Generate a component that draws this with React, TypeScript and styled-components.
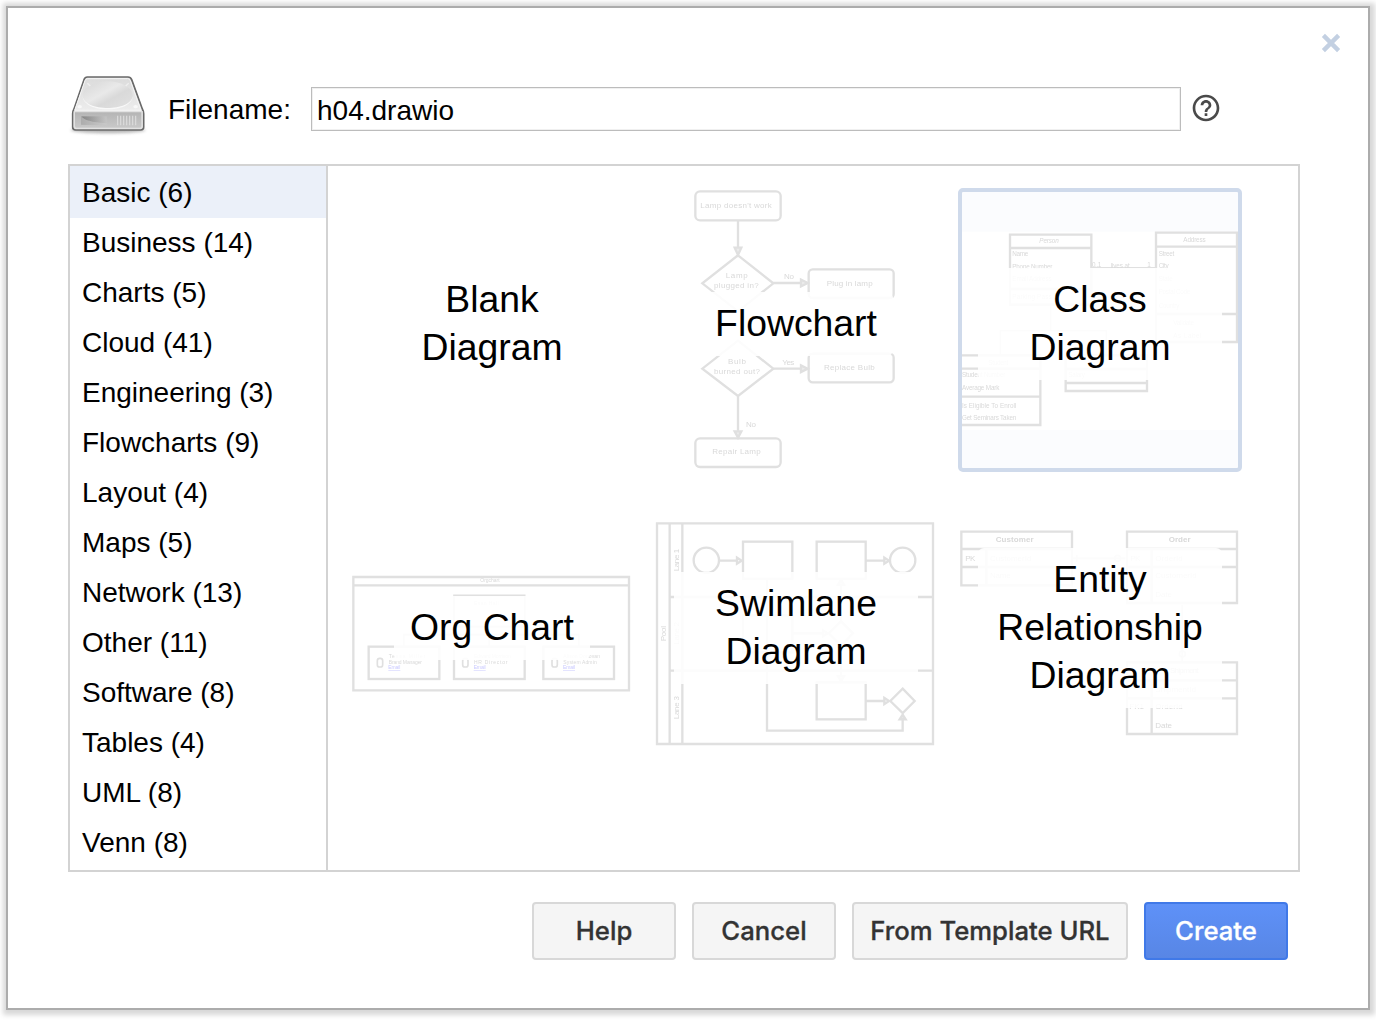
import React from "react";
import styled, { createGlobalStyle, css } from "styled-components";

const GlobalStyle = createGlobalStyle`
  * { box-sizing: border-box; }
  body {
    margin: 0;
    background: #fff;
    color: #000;
    font-family: Helvetica, "Liberation Sans", Arial, sans-serif;
    font-size: 28px;
  }
`;

const Page = styled.div`
  height: 1020px;
  padding: 6px 6px 10px;
  overflow: hidden;
`;

const Dialog = styled.div`
  display: flex;
  flex-direction: column;
  width: 1364px;
  height: 1004px;
  padding: 25px 27px 48px 60px;
  border: 2px solid #acacac;
  background: #fff;
  box-shadow: 1px 1px 5px 4px #d8d8d8;
`;

const CloseButton = styled.button`
  display: flex;
  align-self: flex-end;
  padding: 0;
  border: 0;
  background: none;
`;

const FileRow = styled.div`
  display: flex;
  align-items: center;
  height: 64px;
  margin-top: 23px;
`;

const FileLabel = styled.label`
  flex: none;
  width: 159px;
  padding-left: 16px;
  margin-top: 3px;
  white-space: nowrap;
`;

const FileInput = styled.input`
  width: 870px;
  height: 44px;
  margin: 2px 9px 0 0;
  padding: 5px 5px 1px;
  border: 1px solid #bcbcbc;
  border-radius: 0;
  box-shadow: inset 0 0 0 1px #f0f0f0;
  outline: none;
  font: inherit;
`;

const Browser = styled.div`
  display: flex;
  width: 1232px;
  height: 708px;
  margin-top: 24px;
  border: 2px solid #d3d3d3;
`;

const Categories = styled.ul`
  flex: none;
  width: 258px;
  margin: 0;
  padding: 0;
  border-right: 2px solid #d3d3d3;
  list-style: none;
`;

const Category = styled.li<{ $active?: boolean }>`
  height: 52px;
  margin-bottom: -2px;
  padding-left: 12px;
  line-height: 54px;
  white-space: nowrap;
  ${(p) => p.$active && css`background: #ebf0f9;`}
`;

const Templates = styled.div`
  display: grid;
  grid-template-columns: repeat(3, 284px);
  grid-auto-rows: 284px;
  gap: 20px;
  align-content: start;
  padding: 22px 0 0 22px;
`;

const Template = styled.div<{ $selected?: boolean }>`
  display: grid;
  grid-template: 100% / 100%;
  border-radius: 5px;
  overflow: hidden;
  ${(p) => p.$selected && css`
    border: 4px solid #cfdaeb;
    background: #fbfcfe;
  `}
`;

const Preview = styled.svg`
  grid-area: 1 / 1;
  place-self: center;
  width: 284px;
  height: 284px;
  fill: none;
  stroke: #e0e0e0;
  stroke-width: 7;
  filter: blur(0.75px);
  text {
    fill: #d9d9d9;
    stroke: none;
    font-size: 24px;
  }
`;

const Title = styled.div`
  grid-area: 1 / 1;
  place-self: center;
  z-index: 1;
  max-width: 244px;
  margin-bottom: 13px;
  padding: 7px 16px 9px;
  border-radius: 6px;
  background: rgba(255, 255, 255, 0.88);
  font-size: 37.33px;
  line-height: 48px;
  text-align: center;
`;

const Actions = styled.div`
  display: flex;
  justify-content: flex-end;
  gap: 16px;
  margin: 30px 53px 0 0;
`;

const Button = styled.button<{ $primary?: boolean; $width?: number }>`
  width: ${(p) => p.$width ?? 144}px;
  height: 58px;
  padding: 0 0 2px;
  border: 2px solid #d8d8d8;
  border-radius: 4px;
  background: #f5f5f5;
  color: #333;
  font: 500 25.7px Inter, sans-serif;
  -webkit-text-stroke: 0.3px currentColor;
  white-space: nowrap;
  ${(p) => p.$primary && css`
    border-color: #4079e8;
    background: linear-gradient(#5e91f8, #5886e5);
    color: #fff;
  `}
`;

const Drive = styled.svg`
  flex: none;
  margin-bottom: 7px;
`;

const CloseIcon = () => (
  <svg width="20" height="20" viewBox="0 0 20 20">
    <path d="M2.4 2.4 17.6 17.6M17.6 2.4 2.4 17.6" stroke="#c3d0e2" strokeWidth="4.4" />
  </svg>
);

const HelpIcon = () => (
  <svg width="32" height="32" viewBox="0 0 24 24" fill="#4a4a4a">
    <path d="M11 18h2v-2h-2v2zm1-16C6.48 2 2 6.48 2 12s4.48 10 10 10 10-4.48 10-10S17.52 2 12 2zm0 18c-4.41 0-8-3.59-8-8s3.59-8 8-8 8 3.59 8 8-3.59 8-8 8zm0-14c-2.21 0-4 1.79-4 4h2c0-1.1.9-2 2-2s2 .9 2 2c0 2-3 1.75-3 5h2c0-2.25 3-2.5 3-5 0-2.21-1.79-4-4-4z" />
  </svg>
);

const DriveIcon = () => (
  <Drive width="84" height="68" viewBox="12 0 252 204">
    <defs>
      <linearGradient id="top" x1="0" y1="0" x2="0" y2="1">
        <stop offset="0" stopColor="#dcdcdc" />
        <stop offset="1" stopColor="#ececec" />
      </linearGradient>
      <linearGradient id="platter" x1="0" y1="0" x2="1" y2="1">
        <stop offset="0" stopColor="#d6d6d6" />
        <stop offset=".42" stopColor="#e9e9e9" />
        <stop offset=".6" stopColor="#d9d9d9" />
        <stop offset="1" stopColor="#e2e2e2" />
      </linearGradient>
      <linearGradient id="front" x1="0" y1="0" x2="0" y2="1">
        <stop offset="0" stopColor="#b4b4b4" />
        <stop offset="1" stopColor="#c9c9c9" />
      </linearGradient>
      <linearGradient id="slot">
        <stop offset="0" stopColor="#858585" />
        <stop offset="1" stopColor="#c4c4c4" />
      </linearGradient>
      <filter id="shade" x="-10%" y="-60%" width="120%" height="220%">
        <feGaussianBlur stdDeviation="5" />
      </filter>
    </defs>
    <ellipse cx="132" cy="177" rx="112" ry="10" fill="#999" opacity=".7" filter="url(#shade)" />
    <path d="M70 18h122q8 0 11 8l32 88q4 7 4 14v40q0 9-9 9H35q-9 0-9-9v-40q0-7 4-14L60 26q3-8 10-8z" fill="url(#top)" stroke="#696969" strokeWidth="5" />
    <path d="M71 23h120q6 0 8 6l32 89H32L63 29q2-6 8-6z" fill="url(#top)" stroke="#f5f5f5" strokeWidth="3" />
    <ellipse cx="131" cy="73" rx="75" ry="42" fill="url(#platter)" />
    <path d="M56 75c2 54 148 54 150 0-4 48-146 48-150 0z" fill="#f8f8f8" />
    <ellipse cx="47" cy="107" rx="7" ry="5" fill="#f8f8f8" />
    <ellipse cx="215" cy="107" rx="7" ry="5" fill="#f8f8f8" />
    <path d="M70 37l9 8M194 37l-9 8" stroke="#efefef" strokeWidth="4" />
    <path d="M31 122h203v44q0 6-6 6H37q-6 0-6-6z" fill="url(#front)" stroke="#e2e2e2" strokeWidth="4" />
    <path d="M52 136h76v25H52z" fill="url(#slot)" />
    <path d="M52 136q10 17 76 21v4H52z" fill="#cecece" opacity=".55" />
    <path d="M161 134v29M170 134v29M179 134v29M188 134v29M197 134v29M206 134v29M215 134v29" stroke="#dcdcdc" strokeWidth="3.5" />
  </Drive>
);

const FlowchartPreview = () => (
  <Preview viewBox="-18 24 852 852">
    <rect x="106" y="34" width="256" height="87" rx="14" />
    <path d="M234 121v82M234 648v104M340 309h82M340 566h82" />
    <path d="M224 203h20l-10 22zM224 754h20l-10 19zM423 299v20l20-10zM423 556v20l20-10z" fill="#ececec" />
    <path d="M234 226 340 310 234 394 127 310zM234 482 340 566 234 648 127 566z" />
    <rect x="446" y="268" width="255" height="86" rx="12" />
    <rect x="446" y="521" width="255" height="86" rx="12" />
    <rect x="106" y="775" width="256" height="86" rx="14" />
    <text x="121" y="84" textLength="214">Lamp doesn't work</text>
    <text x="197" y="294" textLength="66">Lamp</text>
    <text x="162" y="324" textLength="134">plugged in?</text>
    <text x="372" y="297" textLength="30">No</text>
    <text x="500" y="318" textLength="138">Plug in lamp</text>
    <text x="204" y="552" textLength="54">Bulb</text>
    <text x="162" y="581" textLength="138">burned out?</text>
    <text x="367" y="556" textLength="36">Yes</text>
    <text x="492" y="570" textLength="152">Replace Bulb</text>
    <text x="258" y="742" textLength="30">No</text>
    <text x="157" y="822" textLength="145">Repair Lamp</text>
  </Preview>
);

const SmallTextPreview = styled(Preview)`
  text { font-size: 19px; }
`;

const ClassPreview = () => (
  <SmallTextPreview viewBox="54 24 852 852">
    <path d="M54 155h852v595H54z" fill="#fff" stroke="none" />
    <path d="M210 164h244v210H210zM210 204h244M210 327h244" />
    <path d="M648 158h243v328H648zM648 200h243M648 402h243" />
    <path d="M454 263h194M332 376v76M181 526v-74h318v74" strokeWidth="4" />
    <path d="M54 526h247v209H54M54 566h247M54 650h247" />
    <path d="M377 526h244v107H377zM377 567h244M377 609h244" />
    <text x="298" y="190" fontStyle="italic" textLength="58">Person</text>
    <text x="217" y="228" textLength="48">Name</text>
    <text x="217" y="266" textLength="120">Phone Number</text>
    <text x="217" y="304" textLength="118">Email Address</text>
    <text x="217" y="358" textLength="118">Parking Pass</text>
    <text x="456" y="261" textLength="28">0..1</text>
    <text x="512" y="263" textLength="57">lives at</text>
    <text x="622" y="261">1</text>
    <text x="730" y="187" textLength="67">Address</text>
    <text x="656" y="227" textLength="47">Street</text>
    <text x="656" y="264" textLength="30">City</text>
    <text x="656" y="304" textLength="42">State</text>
    <text x="656" y="343" textLength="95">Postal Code</text>
    <text x="656" y="383" textLength="62">Country</text>
    <text x="700" y="434" textLength="62">Validate</text>
    <text x="700" y="473" textLength="84">As Label</text>
    <text x="145" y="554" textLength="60">Student</text>
    <text x="66" y="592" textLength="130">Student Number</text>
    <text x="66" y="631" textLength="112">Average Mark</text>
    <text x="66" y="683" textLength="163">Is Eligible To Enroll</text>
    <text x="66" y="721" textLength="163">Get Seminars Taken</text>
    <text x="385" y="592" textLength="50">Salary</text>
  </SmallTextPreview>
);

const people = [
  { x: 86, name: "Tessa Miller", role: "Brand Manager" },
  { x: 342, name: "Edward Morrison", role: "HR Director" },
  { x: 610, name: "Alison Donovan", role: "System Admin" },
];

const OrgCanvas = styled(Preview)`
  text { font-size: 15px; }
`;

const EmailLink = styled.text`
  && { fill: #c9c9ff; }
  text-decoration: underline;
`;

const OrgPreview = () => (
  <OrgCanvas viewBox="30 -204 852 852">
    <path d="M40 51h827v340H40zM40 76h827" />
    <path d="M342 106h212v94H342zM448 200v60M191 260v-36h525v36" strokeWidth="5" />
    <text x="421" y="67" textLength="58">Orgchart</text>
    <text x="402" y="134" textLength="74">Evan Hall</text>
    {people.map((p) => (
      <g key={p.name}>
        <rect x={p.x} y="260" width="212" height="97" />
        <rect x={p.x + 26} y="295" width="16" height="26" rx="7" strokeWidth="5" />
        <text x={p.x + 60} y="294" textLength="110">{p.name}</text>
        <text x={p.x + 60} y="312" textLength="100">{p.role}</text>
        <EmailLink x={p.x + 59} y="328" textLength="36">Email</EmailLink>
      </g>
    ))}
  </OrgCanvas>
);

const SwimlanePreview = () => (
  <Preview viewBox="27 -54 852 852">
    <path d="M36 40h828v662H36zM74 40v662M112 40v662M74 261h790M74 482h790" />
    <circle cx="184" cy="151" r="38" />
    <circle cx="773" cy="151" r="38" />
    <rect x="294" y="95" width="148" height="111" />
    <rect x="515" y="95" width="147" height="111" />
    <rect x="294" y="316" width="148" height="111" />
    <rect x="515" y="517" width="147" height="111" />
    <path d="M222 152h56M662 152h58M662 573h58M442 370h92M366 206v456h407v-40M588 336V224M588 407v92" />
    <path d="M773 536 809 573 773 609 736 573zM588 334 624 370 588 407 551 370z" />
    <path d="M276 143v18l14-9zM718 143v18l14-9zM718 564v18l14-9zM764 628h18l-9-14z" />
    <path d="M534 361v18l14-9zM579 224h18l-9-14zM579 499h18l-9 14z" />
    <text transform="translate(102 184) rotate(-90)" textLength="68">Lane 1</text>
    <text transform="translate(102 404) rotate(-90)" textLength="68">Lane 2</text>
    <text transform="translate(102 628) rotate(-90)" textLength="70">Lane 3</text>
    <text transform="translate(62 394) rotate(-90)" textLength="46">Pool</text>
  </Preview>
);

const EntityPreview = () => (
  <Preview viewBox="24 -54 852 852">
    <path d="M34 65h332v161H34zM34 117h332M34 171h332M109 117v109" />
    <path d="M531 65h330v214H531zM531 117h330M531 171h330M605 117v162" />
    <path d="M531 457h330v215H531zM531 511h330M531 565h330M605 511v161" />
    <path d="M366 145h160M380 135v20M697 284v170" strokeWidth="5" />
    <circle cx="503" cy="145" r="9" strokeWidth="5" />
    <circle cx="697" cy="432" r="9" strokeWidth="5" />
    <text x="137" y="95" fontWeight="700" textLength="114">Customer</text>
    <text x="656" y="95" fontWeight="700" textLength="66">Order</text>
    <text x="660" y="489" fontWeight="700" textLength="86">Shipment</text>
    <text x="46" y="153" textLength="30">PK</text>
    <text x="120" y="153" textLength="124">CustomerId</text>
    <text x="120" y="205" textLength="62">Name</text>
    <text x="541" y="153" textLength="30">PK</text>
    <text x="616" y="153" textLength="82">OrderId</text>
    <text x="616" y="205" textLength="124">CustomerId</text>
    <text x="616" y="260" textLength="50">Date</text>
    <text x="616" y="547" textLength="122">ShipmentId</text>
    <text x="538" y="598" textLength="44">FK1</text>
    <text x="616" y="598" textLength="82">OrderId</text>
    <text x="616" y="654" textLength="50">Date</text>
  </Preview>
);

const categories: [string, number][] = [
  ["Basic", 6], ["Business", 14], ["Charts", 5], ["Cloud", 41], ["Engineering", 3],
  ["Flowcharts", 9], ["Layout", 4], ["Maps", 5], ["Network", 13], ["Other", 11],
  ["Software", 8], ["Tables", 4], ["UML", 8], ["Venn", 8],
];

const templates: { title: string; preview?: React.ReactNode }[] = [
  { title: "Blank Diagram" },
  { title: "Flowchart", preview: <FlowchartPreview /> },
  { title: "Class Diagram", preview: <ClassPreview /> },
  { title: "Org Chart", preview: <OrgPreview /> },
  { title: "Swimlane Diagram", preview: <SwimlanePreview /> },
  { title: "Entity Relationship Diagram", preview: <EntityPreview /> },
];

export default function App() {
  return (
    <Page>
      <GlobalStyle />
      <Dialog>
        <CloseButton aria-label="Close"><CloseIcon /></CloseButton>
        <FileRow>
          <DriveIcon />
          <FileLabel htmlFor="filename">Filename:</FileLabel>
          <FileInput id="filename" defaultValue="h04.drawio" spellCheck={false} />
          <HelpIcon />
        </FileRow>
        <Browser>
          <Categories>
            {categories.map(([name, count]) => (
              <Category key={name} $active={name === "Basic"}>{`${name} (${count})`}</Category>
            ))}
          </Categories>
          <Templates>
            {templates.map((t) => (
              <Template key={t.title} $selected={t.title === "Class Diagram"}>
                {t.preview}
                <Title>{t.title}</Title>
              </Template>
            ))}
          </Templates>
        </Browser>
        <Actions>
          <Button>Help</Button>
          <Button>Cancel</Button>
          <Button $width={276}>From Template URL</Button>
          <Button $primary>Create</Button>
        </Actions>
      </Dialog>
    </Page>
  );
}
